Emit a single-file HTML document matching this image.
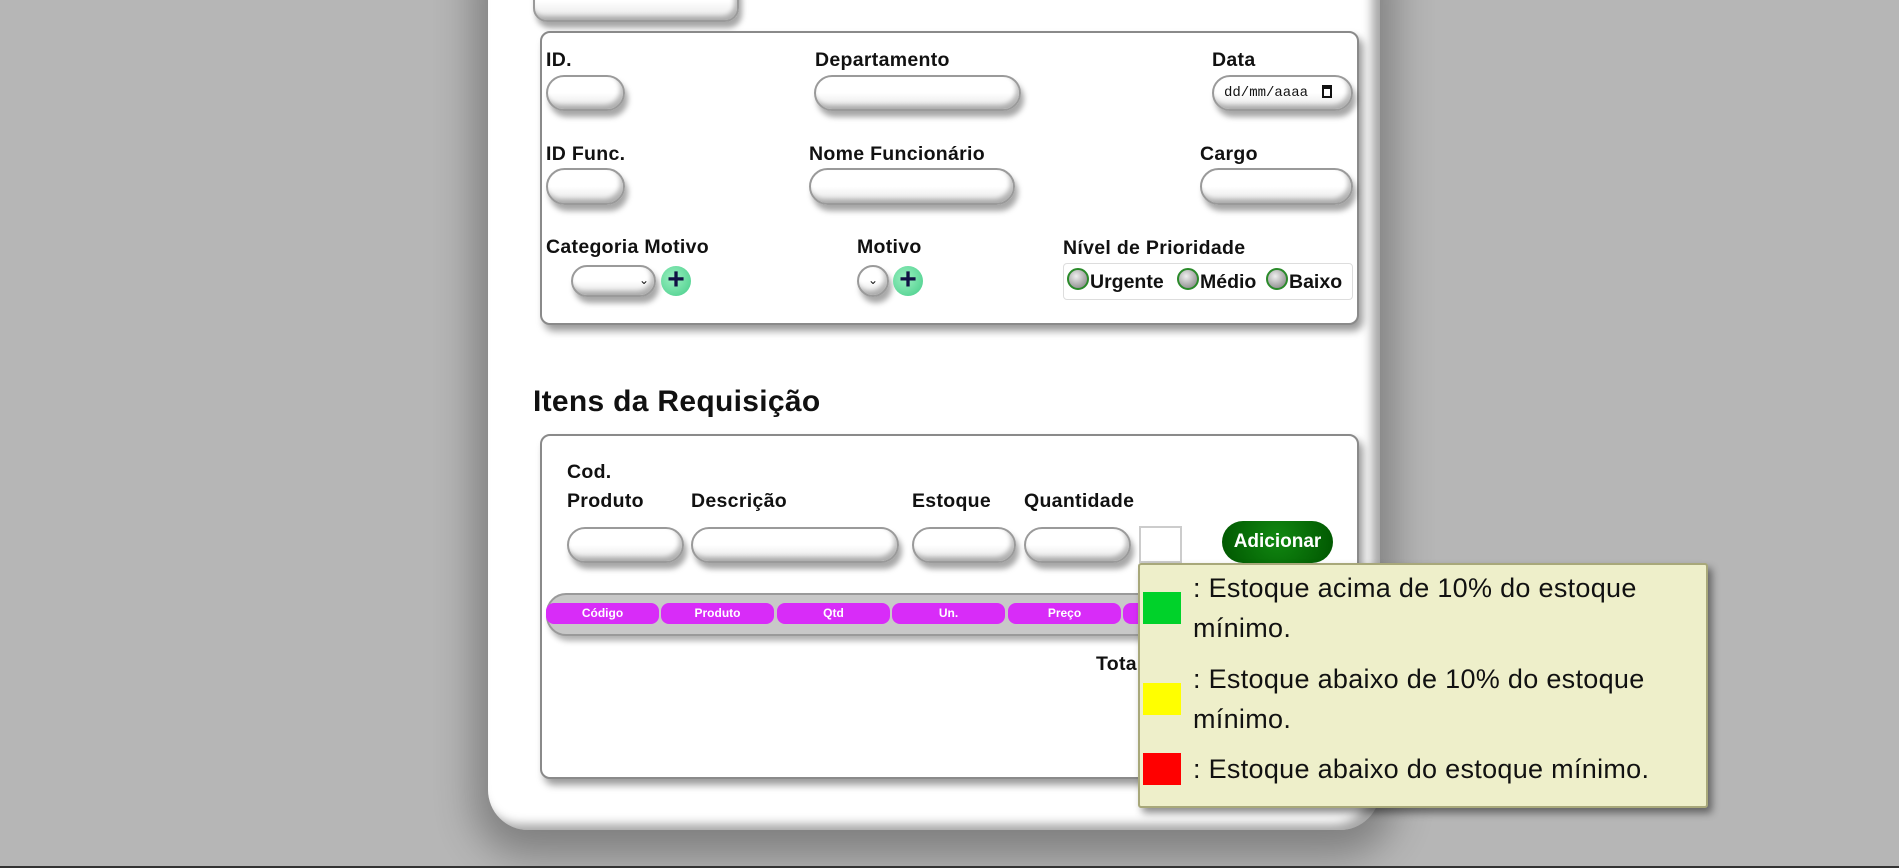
<!DOCTYPE html>
<html><head><meta charset="utf-8"><style>
*{box-sizing:border-box;margin:0;padding:0}
body{width:1899px;height:868px;background:#b6b6b6;position:relative;overflow:hidden;font-family:"Liberation Sans",sans-serif;color:#111}
.a{position:absolute}
.panel{left:488px;top:-40px;width:892px;height:870px;background:#fff;border-radius:0 0 40px 40px;box-shadow:0 12px 40px 14px rgba(0,0,0,.3), -8px -6px 10px rgba(0,0,0,.35) inset}
.box{background:#fff;border:2px solid #8a8a8a;border-radius:10px;box-shadow:4px 6px 8px rgba(0,0,0,.4)}
.inp{background:linear-gradient(#fff 50%,#e4e4e4);border:2px solid #9a9a9a;border-radius:20px;box-shadow:3px 6px 6px rgba(0,0,0,.35), inset -3px -4px 5px rgba(0,0,0,.25)}
.lb{font-size:19.5px;font-weight:bold;white-space:nowrap;letter-spacing:.3px}
.plus{width:30px;height:30px;border-radius:50%;background:radial-gradient(circle at 40% 40%,#9af0c0,#44cc88);color:#114;font-size:30px;line-height:28px;text-align:center;font-weight:bold}
.rad{width:22px;height:22px;border-radius:50%;border:2px solid #2a8a2a;background:radial-gradient(circle at 40% 35%,#eee,#777);top:268px}
.th{top:603px;height:21px;width:113px;background:#d82cf8;color:#fff;font-size:12px;font-weight:bold;text-align:center;line-height:21px;border-radius:8px}
.sw{left:1143px;width:38px;height:32px}
.tt{left:1193px;font-size:27px;line-height:40px;color:#111;letter-spacing:.3px}
</style></head><body>
<div class="a panel"></div>
<div class="a inp" style="left:533px;top:-20px;width:206px;height:42px;border-radius:14px"></div>

<div class="a box" style="left:540px;top:31px;width:819px;height:294px"></div>
<div class="a lb" style="left:546px;top:49px">ID.</div>
<div class="a lb" style="left:815px;top:49px">Departamento</div>
<div class="a lb" style="left:1212px;top:49px">Data</div>
<div class="a inp" style="left:546px;top:75px;width:79px;height:36px"></div>
<div class="a inp" style="left:814px;top:75px;width:207px;height:36px"></div>
<div class="a inp" style="left:1212px;top:75px;width:141px;height:36px;font-family:'Liberation Mono',monospace;font-size:14px;line-height:32px;padding-left:10px">dd/mm/aaaa <span style="display:inline-block;width:10px;height:13px;border:2px solid #111;border-top-width:4px;vertical-align:-2px;margin-left:6px"></span></div>

<div class="a lb" style="left:546px;top:143px">ID Func.</div>
<div class="a lb" style="left:809px;top:143px">Nome Funcionário</div>
<div class="a lb" style="left:1200px;top:143px">Cargo</div>
<div class="a inp" style="left:546px;top:168px;width:79px;height:37px"></div>
<div class="a inp" style="left:809px;top:168px;width:206px;height:37px"></div>
<div class="a inp" style="left:1200px;top:168px;width:153px;height:37px"></div>

<div class="a lb" style="left:546px;top:236px">Categoria Motivo</div>
<div class="a lb" style="left:857px;top:236px">Motivo</div>
<div class="a lb" style="left:1063px;top:237px">Nível de Prioridade</div>
<div class="a inp" style="left:571px;top:265px;width:85px;height:32px;font-size:12px;text-align:right;padding-right:5px;line-height:26px">⌄</div>
<div class="a plus" style="left:661px;top:266px">+</div>
<div class="a inp" style="left:857px;top:265px;width:32px;height:32px;font-size:12px;text-align:center;line-height:26px">⌄</div>
<div class="a plus" style="left:893px;top:266px">+</div>
<div class="a" style="left:1063px;top:263px;width:290px;height:37px;border:1px solid #ddd;border-radius:4px"></div>
<div class="a rad" style="left:1067px"></div>
<div class="a lb" style="left:1090px;top:271px;letter-spacing:0">Urgente</div>
<div class="a rad" style="left:1177px"></div>
<div class="a lb" style="left:1200px;top:271px;letter-spacing:0">Médio</div>
<div class="a rad" style="left:1266px"></div>
<div class="a lb" style="left:1289px;top:271px;letter-spacing:0">Baixo</div>

<div class="a" style="left:533px;top:385px;font-size:30px;font-weight:bold;letter-spacing:.3px">Itens da Requisição</div>

<div class="a box" style="left:540px;top:434px;width:819px;height:345px"></div>
<div class="a lb" style="left:567px;top:461px">Cod.</div>
<div class="a lb" style="left:567px;top:490px">Produto</div>
<div class="a lb" style="left:691px;top:490px">Descrição</div>
<div class="a lb" style="left:912px;top:490px">Estoque</div>
<div class="a lb" style="left:1024px;top:490px">Quantidade</div>
<div class="a inp" style="left:567px;top:527px;width:117px;height:36px"></div>
<div class="a inp" style="left:691px;top:527px;width:208px;height:36px"></div>
<div class="a inp" style="left:912px;top:527px;width:104px;height:36px"></div>
<div class="a inp" style="left:1024px;top:527px;width:107px;height:36px"></div>
<div class="a" style="left:1139px;top:526px;width:43px;height:37px;border:2px solid #ccc;background:#fff"></div>
<div class="a" style="left:1222px;top:521px;width:111px;height:42px;border-radius:21px;background:radial-gradient(circle at 50% 40%,#118811,#005500);color:#fff;font-weight:bold;font-size:19px;text-align:center;line-height:42px">Adicionar</div>

<div class="a" style="left:546px;top:593px;width:810px;height:43px;background:#c8c8c8;border:2px solid #9a9a9a;border-radius:20px;box-shadow:3px 5px 6px rgba(0,0,0,.3)"></div>
<div class="a th" style="left:546px">Código</div>
<div class="a th" style="left:661px">Produto</div>
<div class="a th" style="left:777px">Qtd</div>
<div class="a th" style="left:892px">Un.</div>
<div class="a th" style="left:1008px">Preço</div>
<div class="a th" style="left:1123px">Total</div>
<div class="a lb" style="left:1096px;top:653px">Total</div>

<div class="a" style="left:1138px;top:563px;width:570px;height:245px;background:#eeefca;border:2px solid #a8a87a;border-radius:3px;box-shadow:4px 5px 8px rgba(0,0,0,.45)"></div>
<div class="a sw" style="top:592px;background:#00d22a"></div>
<div class="a sw" style="top:683px;background:#ffff00"></div>
<div class="a sw" style="top:753px;background:#ff0000"></div>
<div class="a tt" style="top:568px">: Estoque acima de 10% do estoque<br>mínimo.</div>
<div class="a tt" style="top:659px">: Estoque abaixo de 10% do estoque<br>mínimo.</div>
<div class="a tt" style="top:749px">: Estoque abaixo do estoque mínimo.</div>
<div class="a" style="left:0;top:866px;width:1899px;height:2px;background:#333"></div>
</body></html>
